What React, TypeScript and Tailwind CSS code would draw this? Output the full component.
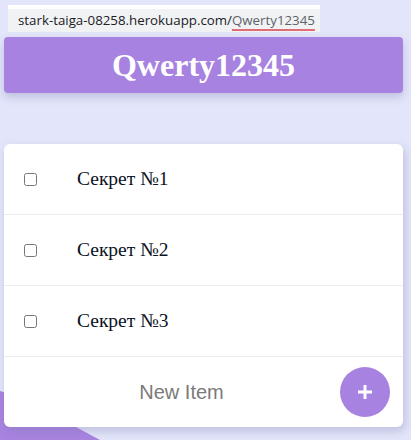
import React from "react";

const items = ["Секрет №1", "Секрет №2", "Секрет №3"];

export default function App() {
  return (
    <div className="relative h-[440px] w-[411px] overflow-hidden bg-[#e3e5fa]">
      <svg
        className="absolute left-0 top-0"
        width="411"
        height="440"
        viewBox="0 0 411 440"
      >
        <polygon points="0,391 30,400 76,427 100,440 0,440" fill="#a883e0" />
      </svg>

      <div className="relative">
        <div className="ml-2 mt-[5px] w-[312px] border-t-4 border-white bg-[#f1f2f4] h-[27px] pl-[10px] font-['Open_Sans',sans-serif] text-[13.3px] leading-[23px] text-[#202124]">
          stark-taiga-08258.herokuapp.com/
          <span className="text-[#5f6368] underline decoration-[#e06c75] decoration-2 underline-offset-[4px]">
            Qwerty12345
          </span>
        </div>

        <div className="ml-1 mr-2 mt-[5px] flex h-[56px] items-center justify-center rounded bg-[#a782e0] shadow-[0_4px_8px_rgba(120,120,170,0.35)]">
          <h1 className="font-['Liberation_Serif',serif] text-[32px] font-bold text-white">
            Qwerty12345
          </h1>
        </div>

        <div className="ml-1 mr-2 mt-[51px] overflow-hidden rounded-md bg-white shadow-[2px_4px_10px_rgba(120,120,170,0.35)]">
          {items.map((item) => (
            <div
              key={item}
              className="flex h-[71px] items-center border-b border-[#ececec]"
            >
              <input type="checkbox" className="ml-[20px] h-[13px] w-[13px]" />
              <span className="ml-[40px] font-['Liberation_Serif',serif] text-[19.5px] text-[#0a1224]">
                {item}
              </span>
            </div>
          ))}
          <div className="flex h-[70px] items-center">
            <div className="flex-1 pl-[19px] text-center font-['Liberation_Sans',sans-serif] text-[20px] text-[#7a7a7a]">
              New Item
            </div>
            <button className="mr-[13px] flex h-[50px] w-[50px] items-center justify-center rounded-full bg-[#a782e0]">
              <svg width="16" height="16" viewBox="0 0 16 16">
                <path d="M8 1v14M1 8h14" stroke="white" strokeWidth="3" />
              </svg>
            </button>
          </div>
        </div>
      </div>
    </div>
  );
}
